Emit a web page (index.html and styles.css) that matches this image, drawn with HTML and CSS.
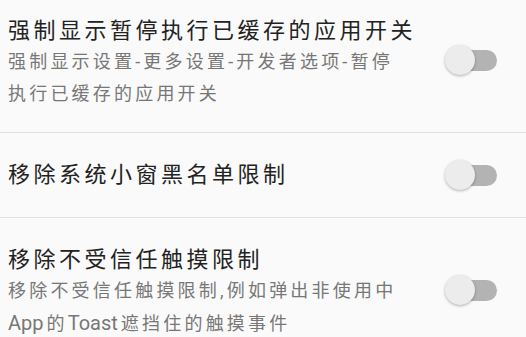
FILE: index.html
```html
<!DOCTYPE html>
<html lang="zh-CN">

<head>
  <meta charset="UTF-8" />
  <meta name="viewport" content="width=device-width, initial-scale=1.0" />
  <title>设置</title>
  <link rel="stylesheet" href="styles.css">
</head>

<body>
  <div class="list">
    <div class="item">
      <div class="text">
        <div class="title">强制显示暂停执行已缓存的应用开关</div>
        <div class="summary">强制显示设置-更多设置-开发者选项-暂停执行已缓存的应用开关</div>
      </div>
      <div class="switch"><span class="thumb"></span></div>
    </div>

    <div class="item">
      <div class="text single">
        <div class="title">移除系统小窗黑名单限制</div>
      </div>
      <div class="switch"><span class="thumb"></span></div>
    </div>

    <div class="item">
      <div class="text">
        <div class="title">移除不受信任触摸限制</div>
        <div class="summary">移除不受信任触摸限制,例如弹出非使用中<span class="latin">App</span>的<span class="latin">Toast</span>遮挡住的触摸事件</div>
      </div>
      <div class="switch"><span class="thumb"></span></div>
    </div>
  </div>
</body>

</html>
```

FILE: styles.css
```css
body {
  margin: 0;
  padding: 0;
  background-color: #fafafa;
  font-family: Roboto, "Noto Sans CJK SC", sans-serif;
  overflow: hidden;
}

.list {
  margin-top: -11px;
}

.item {
  display: flex;
  align-items: center;
  padding: 0 29px 0 8px;
  border-bottom: 1px solid #e0e0e0;
}

.text {
  width: 402px;
  padding: 27px 0 22px;
}

.text.single {
  padding: 27px 0 27px;
}

.title {
  font-size: 22px;
  line-height: 30px;
  letter-spacing: 3.5px;
  color: #222;
  white-space: nowrap;
}

.summary {
  font-size: 18px;
  line-height: 32px;
  letter-spacing: 3.2px;
  color: #777;
}

/* latin runs use the real 20px size, no tracking */
.latin {
  font-size: 20px;
  letter-spacing: 0;
  margin-right: 3px;
}

.switch {
  position: relative;
  width: 51px;
  height: 21px;
  margin-left: auto;
  border-radius: 11px;
  background-color: #b3b3b3;
}

.thumb {
  position: absolute;
  left: -1px;
  top: -5px;
  width: 30px;
  height: 30px;
  border-radius: 50%;
  background-color: #ececec;
  box-shadow: 0 1px 3px rgba(0, 0, 0, 0.3);
}
```
